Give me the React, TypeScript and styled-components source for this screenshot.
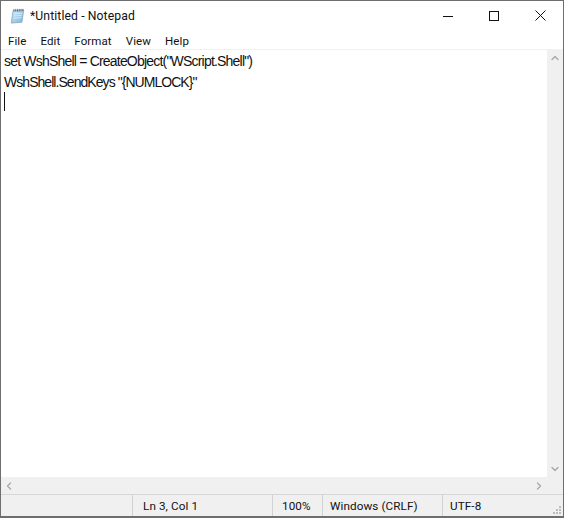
import styled, { createGlobalStyle } from "styled-components";
import { ChevronLeft, ChevronRight, ChevronUp, ChevronDown } from "lucide-react";

const GlobalStyle = createGlobalStyle`
  html, body {
    margin: 0;
    padding: 0;
    background: #fff;
  }
`;

const Window = styled.div`
  width: 564px;
  height: 518px;
  box-sizing: border-box;
  border: 1px solid #6e6e6e;
  border-bottom-width: 2px;
  display: flex;
  flex-direction: column;
  font-family: "Roboto", "Open Sans", sans-serif;
  color: #111;
  background: #fff;
  overflow: hidden;
`;

const TitleBar = styled.div`
  height: 29px;
  flex: none;
  display: flex;
  align-items: center;
  padding-left: 9px;
`;

const AppIcon = styled.svg`
  width: 15px;
  height: 16px;
  margin-right: 5px;
`;

const Title = styled.div`
  font-size: 12.2px;
  flex: 1;
  letter-spacing: 0.1px;
`;

const WinButton = styled.div`
  width: 46px;
  height: 29px;
  display: flex;
  align-items: center;
  justify-content: center;
`;

const MenuBar = styled.div`
  height: 20px;
  box-sizing: border-box;
  padding: 2px 0 0 7px;
  flex: none;
  display: flex;
  align-items: center;
  gap: 14px;
  font-size: 11.5px;
  letter-spacing: 0.1px;
  border-bottom: 1px solid #f0f0f0;
`;

const Middle = styled.div`
  flex: 1;
  display: flex;
  min-height: 0;
`;

const Editor = styled.div`
  flex: 1;
  padding: 1px 0 0 3px;
  font-family: "Liberation Sans", Arial, sans-serif;
  font-size: 14px;
  line-height: 21px;
`;

const Line = styled.div<{ $spacing: number }>`
  height: 21px;
  white-space: pre;
  letter-spacing: ${(p) => p.$spacing}px;
`;

const Caret = styled.div`
  width: 1px;
  height: 19px;
  margin-top: -1px;
  background: #111;
`;

const VScroll = styled.div`
  width: 16px;
  flex: none;
  background: #f0f0f0;
  display: flex;
  flex-direction: column;
  justify-content: space-between;
  align-items: center;
  padding: 2px 0;
  color: #a6a6a6;
`;

const HScroll = styled.div`
  height: 17px;
  flex: none;
  background: #f0f0f0;
  display: flex;
  justify-content: space-between;
  align-items: center;
  padding: 0 18px 0 2px;
  color: #a6a6a6;
`;

const StatusBar = styled.div`
  height: 22px;
  flex: none;
  box-sizing: border-box;
  background: #f0f0f0;
  border-top: 1px solid #d7d7d7;
  display: flex;
  align-items: stretch;
  font-size: 11.7px;
  letter-spacing: 0.1px;
  position: relative;
`;

const StatusCell = styled.div<{ $width: number; $pad?: number }>`
  width: ${(p) => p.$width}px;
  flex: none;
  box-sizing: border-box;
  display: flex;
  align-items: center;
  padding: 1px 0 0 ${(p) => p.$pad ?? 8}px;
  border-left: 1px solid #d2d2d2;
  &:first-child {
    border-left: none;
  }
`;

const Grip = styled.svg`
  position: absolute;
  right: 1px;
  bottom: 1px;
  width: 10px;
  height: 10px;
`;

export default function App() {
  return (
    <>
      <GlobalStyle />
      <Window>
        <TitleBar>
          <AppIcon viewBox="0 0 16 18">
            <defs>
              <linearGradient id="pad" x1="0" y1="0" x2="1" y2="1">
                <stop offset="0" stopColor="#cfe8f6" />
                <stop offset="1" stopColor="#7db9de" />
              </linearGradient>
            </defs>
            <path d="M3 3 L15 2 L13 16 L1 17 Z" fill="url(#pad)" stroke="#7d9db5" strokeWidth="0.8" />
            <path d="M4 6.5 L13 5.8 M3.6 9 L12.6 8.3 M3.3 11.5 L12.3 10.8" stroke="#e6f3fa" strokeWidth="0.8" />
            <path d="M4 1 V4 M6 1 V4 M8 1 V4 M10 1 V4 M12 1 V4 M14 1 V3.5" stroke="#555" strokeWidth="0.8" />
          </AppIcon>
          <Title>*Untitled - Notepad</Title>
          <WinButton>
            <svg width="10" height="10" viewBox="0 0 10 10">
              <path d="M0 5.5 H10" stroke="#111" strokeWidth="1" />
            </svg>
          </WinButton>
          <WinButton>
            <svg width="10" height="10" viewBox="0 0 10 10">
              <rect x="0.5" y="0.5" width="9" height="9" fill="none" stroke="#111" strokeWidth="1" />
            </svg>
          </WinButton>
          <WinButton>
            <svg width="11" height="11" viewBox="0 0 11 11">
              <path d="M0.5 0.5 L10.5 10.5 M10.5 0.5 L0.5 10.5" stroke="#111" strokeWidth="1" />
            </svg>
          </WinButton>
        </TitleBar>
        <MenuBar>
          <span>File</span>
          <span>Edit</span>
          <span>Format</span>
          <span>View</span>
          <span>Help</span>
        </MenuBar>
        <Middle>
          <Editor>
            <Line $spacing={-0.8}>set WshShell = CreateObject("WScript.Shell")</Line>
            <Line $spacing={-0.95}>WshShell.SendKeys "{"{"}NUMLOCK{"}"}"</Line>
            <Caret />
          </Editor>
          <VScroll>
            <ChevronUp size={12} strokeWidth={2.5} />
            <ChevronDown size={12} strokeWidth={2.5} />
          </VScroll>
        </Middle>
        <HScroll>
          <ChevronLeft size={12} strokeWidth={2.5} />
          <ChevronRight size={12} strokeWidth={2.5} />
        </HScroll>
        <StatusBar>
          <StatusCell $width={131} />
          <StatusCell $width={140} $pad={10}>Ln 3, Col 1</StatusCell>
          <StatusCell $width={50} $pad={9}>100%</StatusCell>
          <StatusCell $width={120} $pad={7}>Windows (CRLF)</StatusCell>
          <StatusCell $width={120} $pad={7}>UTF-8</StatusCell>
          <Grip viewBox="0 0 10 10">
            <path d="M7 1h2v2H7z M4 4h2v2H4z M7 4h2v2H7z M1 7h2v2H1z M4 7h2v2H4z M7 7h2v2H7z" fill="#bdbdbd" />
          </Grip>
        </StatusBar>
      </Window>
    </>
  );
}
